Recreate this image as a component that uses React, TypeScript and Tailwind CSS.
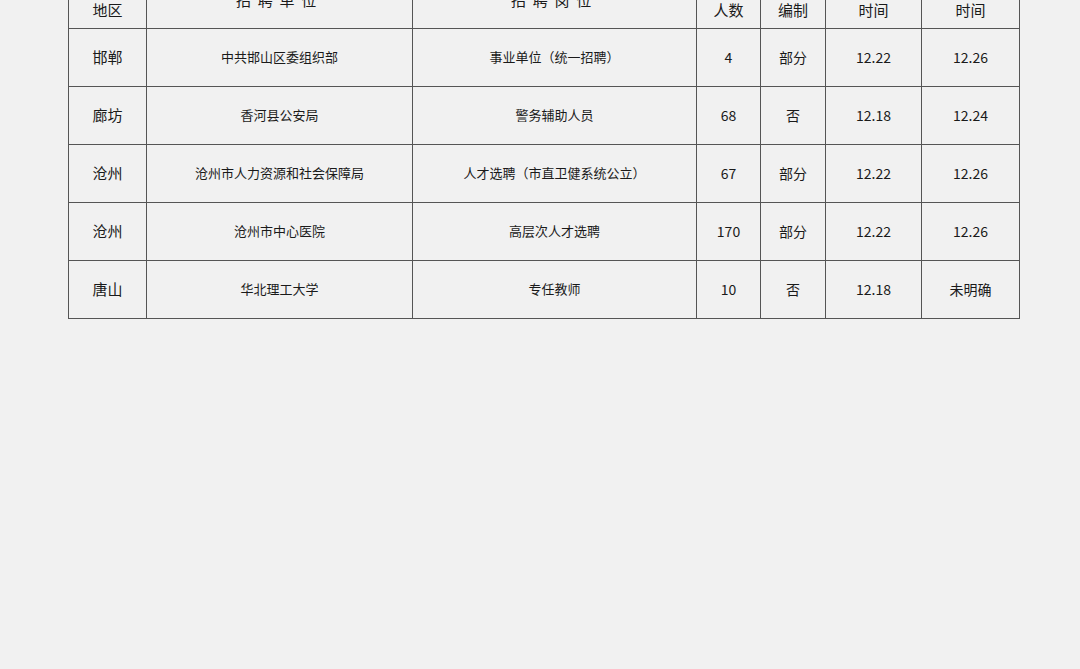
const rows = [
  ["邯郸", "中共邯山区委组织部", "事业单位（统一招聘）", "4", "部分", "12.22", "12.26"],
  ["廊坊", "香河县公安局", "警务辅助人员", "68", "否", "12.18", "12.24"],
  ["沧州", "沧州市人力资源和社会保障局", "人才选聘（市直卫健系统公立）", "67", "部分", "12.22", "12.26"],
  ["沧州", "沧州市中心医院", "高层次人才选聘", "170", "部分", "12.22", "12.26"],
  ["唐山", "华北理工大学", "专任教师", "10", "否", "12.18", "未明确"],
];

export default function App(): React.ReactElement {
  return (
    <main className="h-[669px] overflow-hidden bg-[#f1f1f1] px-[68px] text-[#1a1a1a] font-['Segoe_UI','Noto_Sans_CJK_SC',sans-serif]">
      <table className="-mt-[30px] w-[951px] table-fixed border-collapse">
        <colgroup>
          <col className="w-[78px]" />
          <col className="w-[266px]" />
          <col className="w-[284px]" />
          <col className="w-[64px]" />
          <col className="w-[65px]" />
          <col className="w-[96px]" />
          <col className="w-[98px]" />
        </colgroup>
        <thead>
          <tr className="h-[58px] text-[15px] leading-[20px]">
            <th className="border border-[#555] font-normal">所属<br />地区</th>
            <th className="border border-[#555] font-normal tracking-[0.45em]">招聘单位</th>
            <th className="border border-[#555] font-normal tracking-[0.45em]">招聘岗位</th>
            <th className="border border-[#555] font-normal">招聘<br />人数</th>
            <th className="border border-[#555] font-normal">是否<br />编制</th>
            <th className="border border-[#555] font-normal">报名开始<br />时间</th>
            <th className="border border-[#555] font-normal">报名截止<br />时间</th>
          </tr>
        </thead>
        <tbody>
          {rows.map((r, i) => (
            <tr key={i} className="h-[58px] text-[13px] leading-[16px]">
              <td className="border border-[#555] pb-[2px] text-center text-[15px]">{r[0]}</td>
              <td className="border border-[#555] pb-[2px] text-center">{r[1]}</td>
              <td className="border border-[#555] pb-[2px] text-center">{r[2]}</td>
              <td className="border border-[#555] pb-[2px] text-center text-[14px]">{r[3]}</td>
              <td className="border border-[#555] pb-[2px] text-center text-[14px]">{r[4]}</td>
              <td className="border border-[#555] pb-[2px] text-center text-[14px]">{r[5]}</td>
              <td className="border border-[#555] pb-[2px] text-center text-[14px]">{r[6]}</td>
            </tr>
          ))}
        </tbody>
      </table>
    </main>
  );
}
